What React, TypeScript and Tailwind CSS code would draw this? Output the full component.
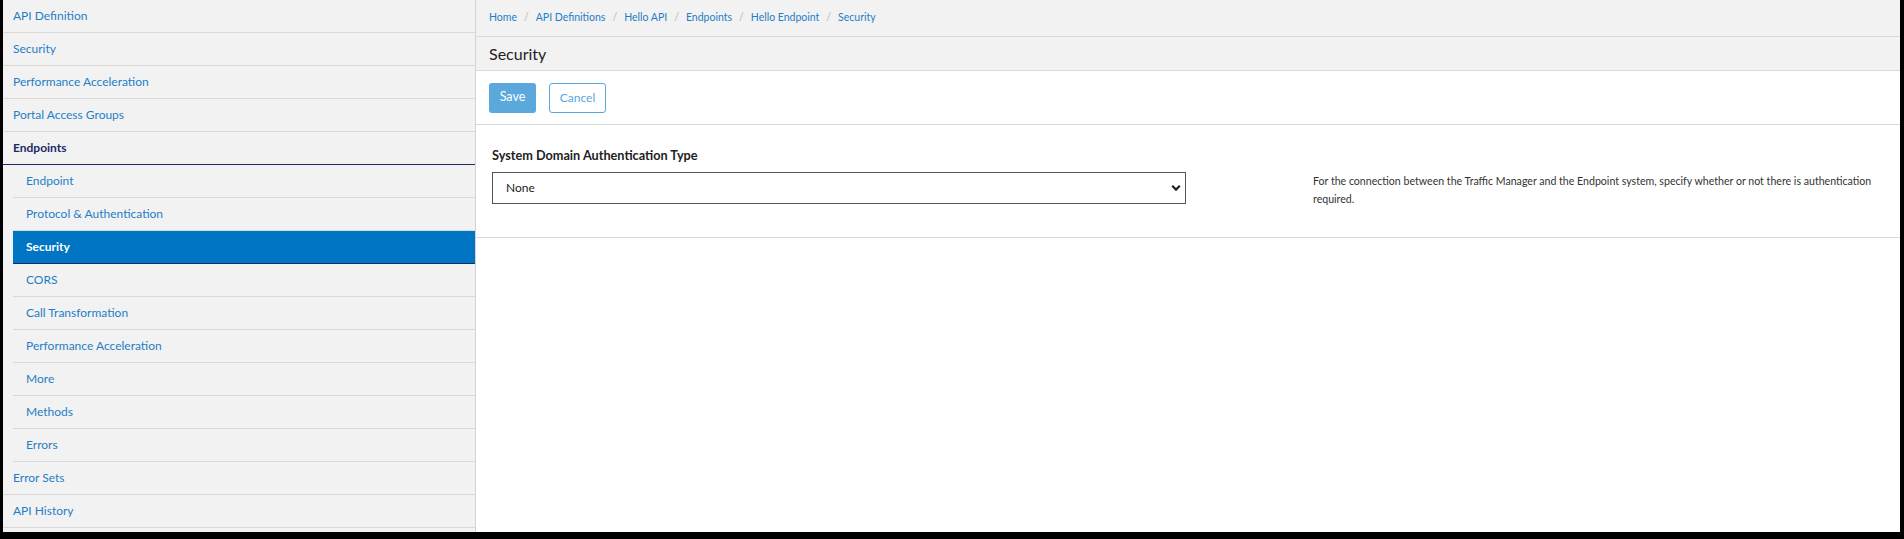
import React from "react";

const topItems = ["API Definition", "Security", "Performance Acceleration", "Portal Access Groups"];
const subItems = [
  "Endpoint",
  "Protocol & Authentication",
  "Security",
  "CORS",
  "Call Transformation",
  "Performance Acceleration",
  "More",
  "Methods",
  "Errors",
];
const crumbs = ["Home", "API Definitions", "Hello API", "Endpoints", "Hello Endpoint", "Security"];

export default function App() {
  return (
    <div className="w-full h-[539px] bg-black pl-[3px] pr-[4px] pb-[7px] font-['Lato',sans-serif]">
      <div className="flex h-[532px] w-full overflow-hidden bg-white">
        {/* Sidebar */}
        <aside className="w-[473px] shrink-0 bg-[#f2f2f2] border-r border-[#d4d4d4]">
          {topItems.map((t) => (
            <div
              key={t}
              className="h-[33px] border-b border-[#d9d9d9] pl-[10px] flex items-center text-[12px] text-[#1f7ec6]"
            >
              {t}
            </div>
          ))}
          <div className="h-[33px] border-b border-[#1c2b66] pl-[10px] flex items-center text-[12px] font-bold text-[#1c2b66]">
            Endpoints
          </div>
          <div className="ml-[10px]">
            {subItems.map((t, i) =>
              i === 2 ? (
                <div
                  key={i}
                  className="h-[33px] border-b border-[#1c2b66] bg-[#0075c4] pl-[13px] flex items-center text-[12px] font-bold text-white"
                >
                  {t}
                </div>
              ) : (
                <div
                  key={i}
                  className="h-[33px] border-b border-[#d9d9d9] pl-[13px] flex items-center text-[12px] text-[#1f7ec6]"
                >
                  {t}
                </div>
              )
            )}
          </div>
          {["Error Sets", "API History"].map((t) => (
            <div
              key={t}
              className="h-[33px] border-b border-[#d9d9d9] pl-[10px] flex items-center text-[12px] text-[#1f7ec6]"
            >
              {t}
            </div>
          ))}
        </aside>

        {/* Main */}
        <main className="flex-1 min-w-0 bg-white">
          <div className="h-[37px] bg-[#f2f2f2] border-b border-[#d9d9d9] pl-[13px] flex items-center text-[10.5px] text-[#1f7ec6]">
            {crumbs.map((c, i) => (
              <React.Fragment key={i}>
                {i > 0 && <span className="mx-[7px] text-[#b5b5b5]">/</span>}
                <span>{c}</span>
              </React.Fragment>
            ))}
          </div>
          <div className="h-[34px] bg-[#f2f2f2] border-b border-[#d9d9d9] pl-[13px] flex items-center text-[16px] text-[#222]">
            Security
          </div>
          <div className="h-[54px] border-b border-[#d9d9d9] pl-[13px] flex items-center gap-[13px]">
            <button className="h-[30px] w-[47px] rounded-[3px] bg-[#5aa8dc] text-white text-[12.5px] flex items-center justify-center">
              Save
            </button>
            <button className="h-[30px] w-[57px] rounded-[3px] border border-[#5aa8dc] bg-white text-[#5aa8dc] text-[12px] flex items-center justify-center">
              Cancel
            </button>
          </div>
          <div className="h-[113px] border-b border-[#d9d9d9] pl-[16px] pt-[23px] flex">
            <div className="w-[694px] shrink-0">
              <div className="text-[12.7px] font-bold text-[#222] leading-[15px] h-[24px]">
                System Domain Authentication Type
              </div>
              <div className="relative w-[694px] h-[32px]">
                <select className="appearance-none w-full h-full border border-[#555] bg-white pl-[13px] text-[12px] text-[#222] outline-none">
                  <option>None</option>
                </select>
                <svg
                  className="absolute right-[5px] top-[12px] pointer-events-none"
                  width="10"
                  height="8"
                  viewBox="0 0 10 8"
                >
                  <path d="M1.2 1.8 L5 5.6 L8.8 1.8" fill="none" stroke="#222" strokeWidth="2.2" />
                </svg>
              </div>
            </div>
            <div className="ml-[127px] pt-[24px] text-[10.6px] leading-[18px] text-[#333]">
              <div className="whitespace-nowrap">
                For the connection between the Traffic Manager and the Endpoint system, specify whether or not there is
                authentication
              </div>
              <div>required.</div>
            </div>
          </div>
        </main>
      </div>
    </div>
  );
}
